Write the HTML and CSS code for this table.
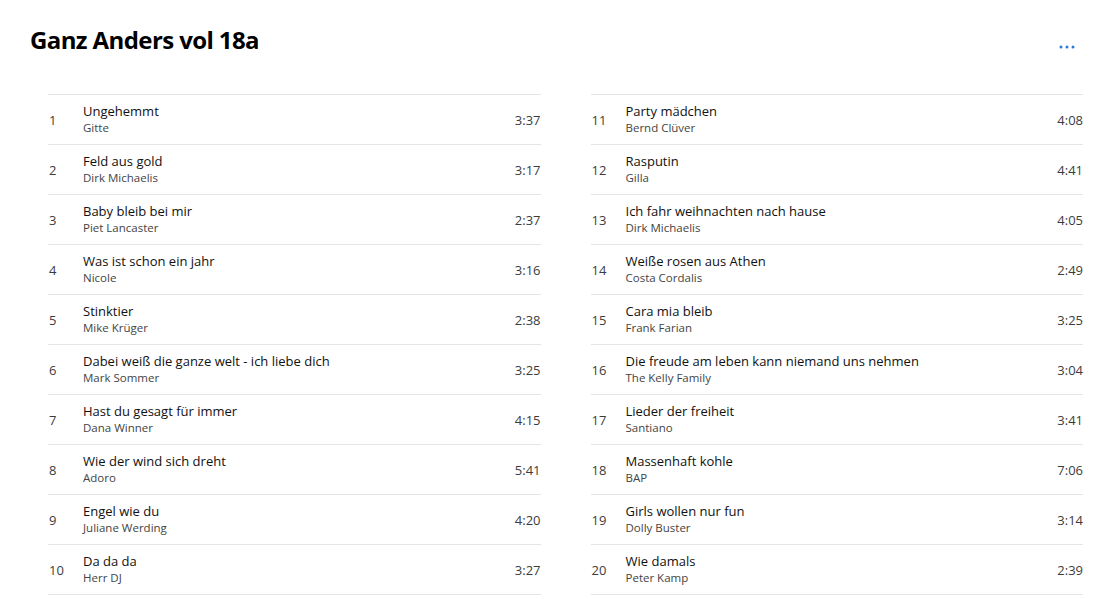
FILE: index.html
```html
<!DOCTYPE html>
<html lang="de">
<head>
<meta charset="utf-8">
<title>Ganz Anders vol 18a</title>
<link rel="stylesheet" href="styles.css">
</head>
<body>
<div class="page">
  <header class="header">
    <h1 class="title">Ganz Anders vol 18a</h1>
    <button class="more" aria-label="Mehr">
      <svg width="16" height="4" viewBox="0 0 16 4"><circle cx="2" cy="2" r="1.5"/><circle cx="8" cy="2" r="1.5"/><circle cx="14" cy="2" r="1.5"/></svg>
    </button>
  </header>
  <div class="columns">
    <ol class="tracks">
      <li class="track"><span class="num">1</span><div class="info"><div class="name">Ungehemmt</div><div class="artist">Gitte</div></div><span class="dur">3:37</span></li>
      <li class="track"><span class="num">2</span><div class="info"><div class="name">Feld aus gold</div><div class="artist">Dirk Michaelis</div></div><span class="dur">3:17</span></li>
      <li class="track"><span class="num">3</span><div class="info"><div class="name">Baby bleib bei mir</div><div class="artist">Piet Lancaster</div></div><span class="dur">2:37</span></li>
      <li class="track"><span class="num">4</span><div class="info"><div class="name">Was ist schon ein jahr</div><div class="artist">Nicole</div></div><span class="dur">3:16</span></li>
      <li class="track"><span class="num">5</span><div class="info"><div class="name">Stinktier</div><div class="artist">Mike Krüger</div></div><span class="dur">2:38</span></li>
      <li class="track"><span class="num">6</span><div class="info"><div class="name">Dabei weiß die ganze welt - ich liebe dich</div><div class="artist">Mark Sommer</div></div><span class="dur">3:25</span></li>
      <li class="track"><span class="num">7</span><div class="info"><div class="name">Hast du gesagt für immer</div><div class="artist">Dana Winner</div></div><span class="dur">4:15</span></li>
      <li class="track"><span class="num">8</span><div class="info"><div class="name">Wie der wind sich dreht</div><div class="artist">Adoro</div></div><span class="dur">5:41</span></li>
      <li class="track"><span class="num">9</span><div class="info"><div class="name">Engel wie du</div><div class="artist">Juliane Werding</div></div><span class="dur">4:20</span></li>
      <li class="track"><span class="num">10</span><div class="info"><div class="name">Da da da</div><div class="artist">Herr DJ</div></div><span class="dur">3:27</span></li>
    </ol>
    <ol class="tracks">
      <li class="track"><span class="num">11</span><div class="info"><div class="name">Party mädchen</div><div class="artist">Bernd Clüver</div></div><span class="dur">4:08</span></li>
      <li class="track"><span class="num">12</span><div class="info"><div class="name">Rasputin</div><div class="artist">Gilla</div></div><span class="dur">4:41</span></li>
      <li class="track"><span class="num">13</span><div class="info"><div class="name">Ich fahr weihnachten nach hause</div><div class="artist">Dirk Michaelis</div></div><span class="dur">4:05</span></li>
      <li class="track"><span class="num">14</span><div class="info"><div class="name">Weiße rosen aus Athen</div><div class="artist">Costa Cordalis</div></div><span class="dur">2:49</span></li>
      <li class="track"><span class="num">15</span><div class="info"><div class="name">Cara mia bleib</div><div class="artist">Frank Farian</div></div><span class="dur">3:25</span></li>
      <li class="track"><span class="num">16</span><div class="info"><div class="name">Die freude am leben kann niemand uns nehmen</div><div class="artist">The Kelly Family</div></div><span class="dur">3:04</span></li>
      <li class="track"><span class="num">17</span><div class="info"><div class="name">Lieder der freiheit</div><div class="artist">Santiano</div></div><span class="dur">3:41</span></li>
      <li class="track"><span class="num">18</span><div class="info"><div class="name">Massenhaft kohle</div><div class="artist">BAP</div></div><span class="dur">7:06</span></li>
      <li class="track"><span class="num">19</span><div class="info"><div class="name">Girls wollen nur fun</div><div class="artist">Dolly Buster</div></div><span class="dur">3:14</span></li>
      <li class="track"><span class="num">20</span><div class="info"><div class="name">Wie damals</div><div class="artist">Peter Kamp</div></div><span class="dur">2:39</span></li>
    </ol>
  </div>
</div>
</body>
</html>
```
FILE: styles.css
```css
* { box-sizing: border-box; }
html, body { margin: 0; padding: 0; background: #fff; }
body {
  font-family: "Open Sans", "Noto Sans", "Liberation Sans", sans-serif;
  color: #000;
}
.page { padding: 0 35px 0 0; }
.header {
  display: flex;
  align-items: flex-start;
  justify-content: space-between;
  padding: 24px 0 0 30px;
  height: 94px;
}
.title {
  margin: 0;
  font-size: 24px;
  font-weight: 700;
  line-height: 32px;
  letter-spacing: -0.6px;
}
.more {
  border: 0;
  background: transparent;
  padding: 0;
  margin: 21px 8px 0 0;
  width: 16px;
  height: 4px;
  display: flex;
  fill: #2b79d5;
  cursor: pointer;
}
.columns {
  display: grid;
  grid-template-columns: 1fr 1fr;
  column-gap: 50px;
  padding-left: 48px;
}
.tracks {
  list-style: none;
  margin: 0;
  padding: 0;
  border-bottom: 1px solid #e5e5e5;
}
.track {
  display: flex;
  align-items: center;
  height: 50px;
  border-top: 1px solid #e5e5e5;
}
.num {
  width: 35px;
  padding-left: 1px;
  font-size: 13px;
  color: #3c3c3c;
}
.info {
  flex: 1;
  display: flex;
  flex-direction: column;
}
.name {
  font-size: 13px;
  line-height: 17px;
  color: #111;
}
.artist {
  font-size: 11.5px;
  line-height: 16px;
  color: #444;
}
.dur {
  font-size: 13px;
  color: #3c3c3c;
}
```
